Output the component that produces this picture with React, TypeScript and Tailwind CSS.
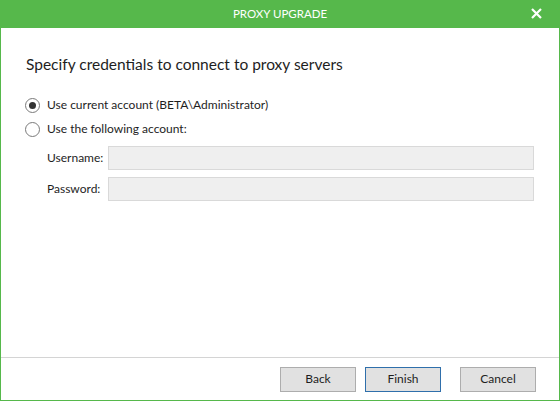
import React, { useState } from 'react';

const font = { fontFamily: '"Segoe UI", Lato, "Noto Sans", sans-serif' };

const Radio: React.FC<{ checked: boolean; label: string; onClick: () => void }> = ({ checked, label, onClick }) => (
    <div onClick={onClick} className="flex items-center h-[24px] cursor-pointer">
        <span className="w-[15px] h-[15px] rounded-full border border-[#7a7a7a] bg-white flex items-center justify-center">
            {checked && <span className="w-[7px] h-[7px] rounded-full bg-[#333333]" />}
        </span>
        <span className="ml-[7px] text-[12px] text-[#1e1e1e]">{label}</span>
    </div>
);

const Field: React.FC<{ label: string }> = ({ label }) => (
    <div className="flex items-center h-[24px]">
        <span className="w-[61px] shrink-0 text-[12px] text-[#1e1e1e]">{label}</span>
        <div className="flex-1 h-[24px] bg-[#efefef] border border-[#d9d9d9]" />
    </div>
);

const App: React.FC = () => {
    const [mode, setMode] = useState<'current' | 'other'>('current');

    return (
        <div style={font} className="w-[560px] h-[401px] flex flex-col bg-white border-x border-b border-[#56b84b] box-border">
            {/* Title bar */}
            <div className="h-[28px] -mx-px bg-[#56b84b] flex items-center justify-center relative shrink-0">
                <span className="text-white text-[11.5px]">PROXY UPGRADE</span>
                <button className="absolute right-[18px] top-[8px] w-[11px] h-[11px]">
                    <svg viewBox="0 0 11 11" width="11" height="11">
                        <path d="M1 1 L10 10 M10 1 L1 10" stroke="white" strokeWidth="2.2" />
                    </svg>
                </button>
            </div>

            {/* Body */}
            <div className="flex-1 pl-[24px] pr-[25px] pt-[24px]">
                <h1 className="text-[15.5px] leading-[24px] text-[#1e1e1e] ml-px">Specify credentials to connect to proxy servers</h1>

                <div className="mt-[17px] flex flex-col">
                    <Radio checked={mode === 'current'} label="Use current account (BETA\Administrator)" onClick={() => setMode('current')} />
                    <Radio checked={mode === 'other'} label="Use the following account:" onClick={() => setMode('other')} />
                </div>

                <div className="mt-[5px] ml-[22px] flex flex-col gap-[7px]">
                    <Field label="Username:" />
                    <Field label="Password:" />
                </div>
            </div>

            {/* Footer */}
            <div className="h-[43px] border-t border-[#d4d4d4] flex items-center justify-end pr-[23px] shrink-0">
                <button className="w-[76px] h-[25px] bg-[#e1e1e1] border border-[#adadad] text-[12px] text-[#1e1e1e]">Back</button>
                <button className="ml-[9px] w-[76px] h-[25px] bg-[#e1e1e1] border border-[#2f6fab] text-[12px] text-[#1e1e1e]">Finish</button>
                <button className="ml-[19px] w-[76px] h-[25px] bg-[#e1e1e1] border border-[#adadad] text-[12px] text-[#1e1e1e]">Cancel</button>
            </div>
        </div>
    );
};

export default App;
